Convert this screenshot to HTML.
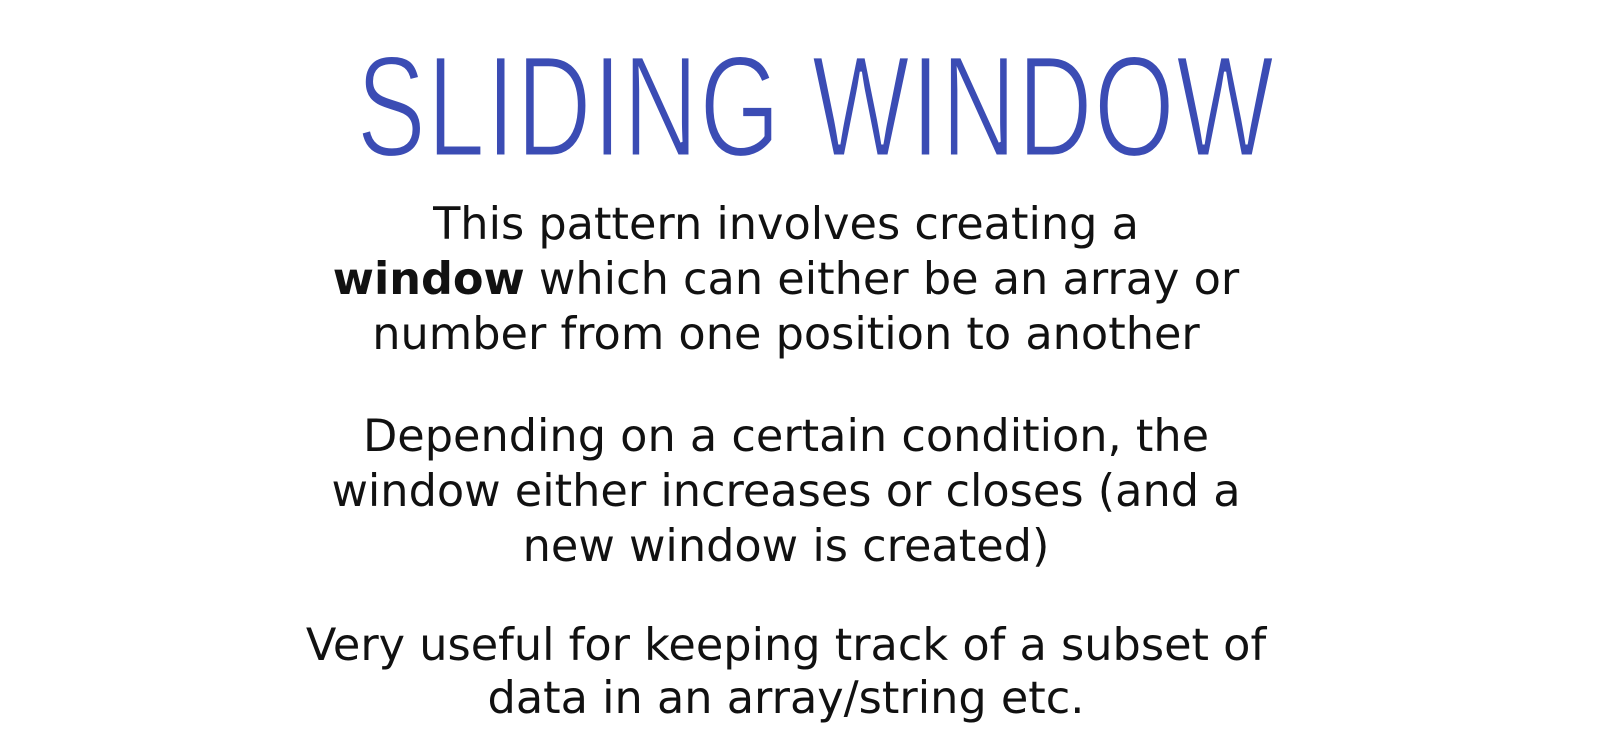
<!DOCTYPE html>
<html><head><meta charset="utf-8"><style>
html,body{margin:0;padding:0;background:#fff;width:1599px;height:734px;overflow:hidden;position:relative}
.t{position:absolute;left:0;width:1599px;text-align:center;white-space:nowrap}
.title{top:35px;left:816px;width:0;}
.title span{position:absolute;left:0;transform:translateX(-50%) scaleX(0.72);transform-origin:center;font-family:"Liberation Sans",sans-serif;font-size:144px;color:#3b4cb4;letter-spacing:2px;line-height:1;white-space:nowrap;top:0;font-weight:normal;-webkit-text-stroke:3px #fff;paint-order:normal}
.l{position:absolute;left:786px;width:0;font-family:"DejaVu Sans","Liberation Sans",sans-serif;font-size:44.6px;color:#111;line-height:1;white-space:nowrap}
.l span{position:absolute;left:0;transform:translateX(-50%);white-space:nowrap}
</style></head><body>
<div class="t title"><span>SLIDING WINDOW</span></div>
<div class="l" style="top:202px"><span>This pattern involves creating a</span></div>
<div class="l" style="top:257px"><span><b>window</b> which can either be an array or</span></div>
<div class="l" style="top:312px"><span>number from one position to another</span></div>
<div class="l" style="top:414px"><span>Depending on a certain condition, the</span></div>
<div class="l" style="top:469px"><span>window either increases or closes (and a</span></div>
<div class="l" style="top:524px"><span>new window is created)</span></div>
<div class="l" style="top:623px"><span>Very useful for keeping track of a subset of</span></div>
<div class="l" style="top:676px"><span>data in an array/string etc.</span></div>
</body></html>
